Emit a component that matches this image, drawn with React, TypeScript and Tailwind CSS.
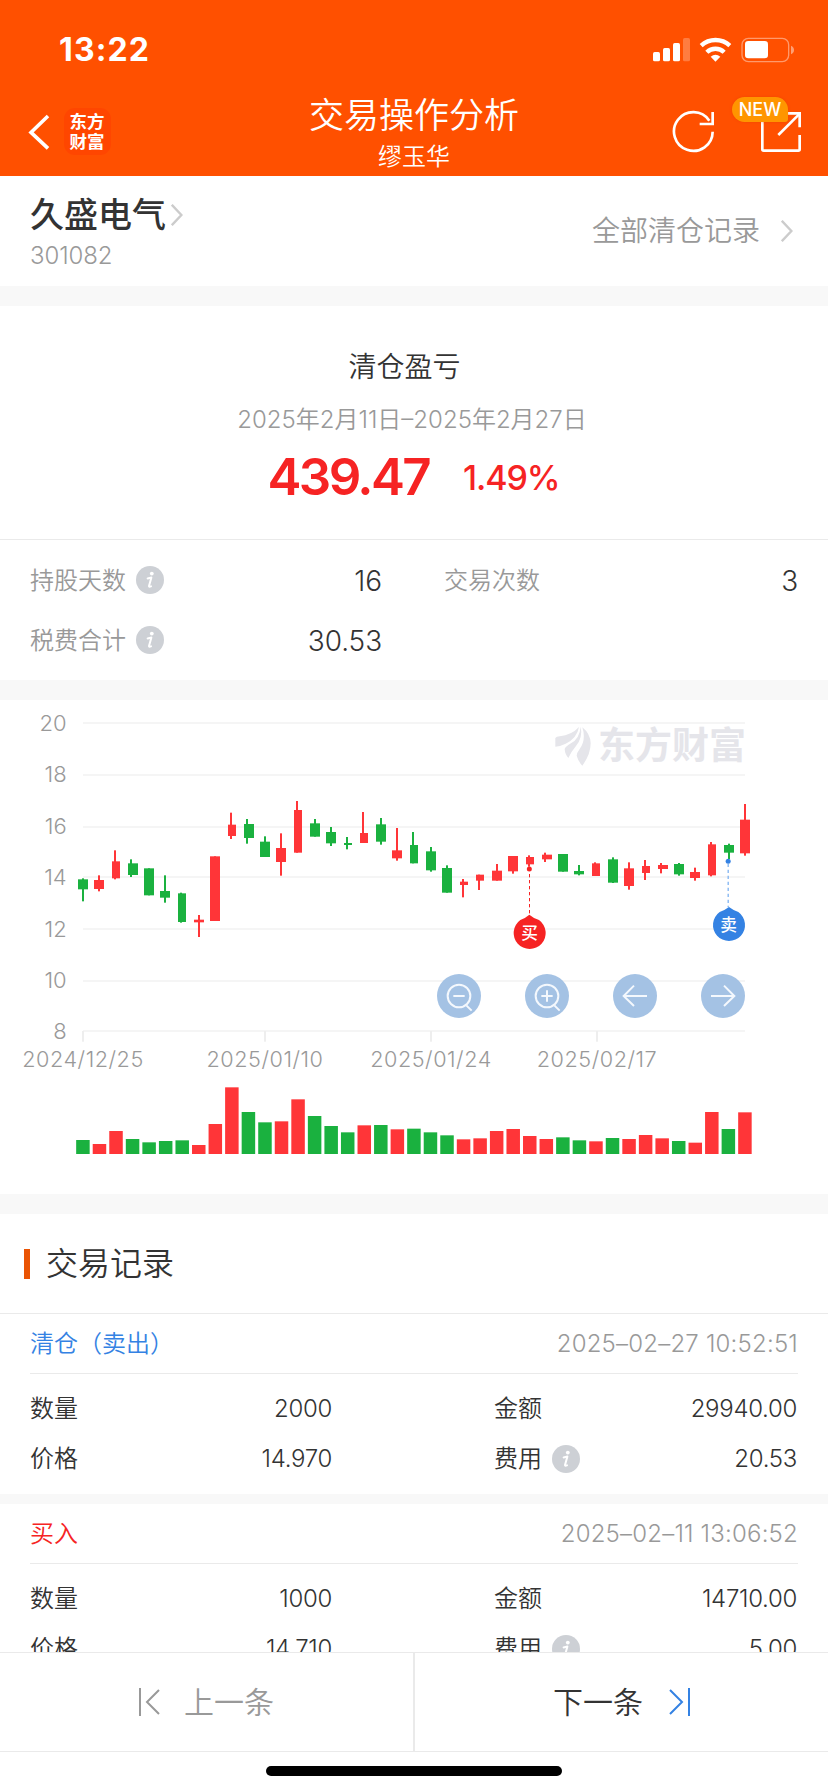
import type { ReactNode } from 'react'

type Color = 'r' | 'g'

// color, body x, body width, wick x, high, body top, body bottom, low
type Candle = [Color, number, number, number, number, number, number, number]

const RED = '#ff3538'
const GREEN = '#1ab13f'

const candles: Candle[] = [
  ['g', 234, 30, 246, 535, 538, 568, 604],
  ['r', 282, 30, 294, 526, 540, 567, 574],
  ['r', 336, 24, 342, 451, 484, 535, 538],
  ['g', 384, 30, 390, 478, 490, 525, 531],
  ['g', 432, 30, 444, 505, 505, 586, 586],
  ['g', 480, 30, 492, 526, 573, 593, 608],
  ['g', 534, 24, 540, 578, 580, 666, 668],
  ['r', 582, 30, 594, 645, 659, 667, 711],
  ['r', 630, 30, 642, 469, 469, 663, 663],
  ['r', 684, 24, 690, 338, 374, 408, 417],
  ['g', 732, 30, 738, 357, 372, 414, 431],
  ['g', 780, 30, 792, 409, 425, 471, 471],
  ['r', 828, 30, 840, 400, 444, 486, 527],
  ['r', 882, 24, 888, 303, 330, 458, 458],
  ['g', 930, 30, 942, 357, 370, 410, 410],
  ['g', 978, 30, 990, 381, 396, 430, 438],
  ['g', 1032, 24, 1038, 411, 429, 435, 448],
  ['r', 1080, 24, 1086, 336, 399, 429, 429],
  ['g', 1128, 30, 1140, 354, 373, 425, 434],
  ['r', 1176, 30, 1188, 384, 451, 475, 482],
  ['g', 1230, 24, 1236, 396, 435, 490, 490],
  ['g', 1278, 30, 1290, 441, 454, 511, 515],
  ['g', 1326, 30, 1338, 496, 504, 578, 578],
  ['r', 1380, 24, 1386, 537, 545, 555, 592],
  ['r', 1428, 24, 1434, 524, 524, 542, 570],
  ['r', 1476, 30, 1488, 492, 512, 542, 542],
  ['r', 1524, 30, 1536, 468, 468, 514, 521],
  ['r', 1578, 24, 1584, 466, 471, 493, 500],
  ['r', 1626, 30, 1632, 458, 464, 478, 486],
  ['g', 1674, 30, 1686, 462, 462, 515, 515],
  ['g', 1722, 30, 1734, 495, 513, 523, 526],
  ['r', 1776, 24, 1782, 487, 490, 528, 528],
  ['g', 1824, 30, 1836, 472, 478, 548, 549],
  ['r', 1872, 30, 1884, 487, 505, 558, 569],
  ['r', 1926, 24, 1932, 480, 498, 519, 540],
  ['r', 1974, 30, 1980, 489, 495, 507, 520],
  ['g', 2022, 30, 2034, 489, 492, 523, 527],
  ['r', 2070, 30, 2082, 503, 516, 534, 542],
  ['r', 2124, 24, 2130, 426, 433, 526, 529],
  ['g', 2172, 30, 2184, 431, 435, 458, 477],
  ['r', 2220, 30, 2232, 312, 359, 460, 467],
]

const volumeTops = [
  1320, 1332, 1293, 1317, 1327, 1323, 1321, 1335, 1272, 1162, 1236, 1267, 1264, 1198,
  1248, 1278, 1297, 1276, 1275, 1288, 1286, 1297, 1306, 1318, 1315, 1293, 1287, 1308,
  1317, 1312, 1321, 1324, 1314, 1317, 1305, 1315, 1323, 1328, 1236, 1287, 1237,
]

const gridLines = [
  { label: '20', y: 66 },
  { label: '18', y: 222 },
  { label: '16', y: 378 },
  { label: '14', y: 528 },
  { label: '12', y: 684 },
  { label: '10', y: 840 },
  { label: '8', y: 990 },
]

const dates = [
  { label: '2024/12/25', x: 249 },
  { label: '2025/01/10', x: 795 },
  { label: '2025/01/24', x: 1293 },
  { label: '2025/02/17', x: 1791 },
]

interface Trade {
  type: string
  tone: string
  time: string
  quantity: string
  price: string
  amount: string
  fee: string
}

const trades: Trade[] = [
  {
    type: '清仓（卖出）',
    tone: 'text-[#3482e3]',
    time: '2025–02–27 10:52:51',
    quantity: '2000',
    price: '14.970',
    amount: '29940.00',
    fee: '20.53',
  },
  {
    type: '买入',
    tone: 'text-[#f62323]',
    time: '2025–02–11 13:06:52',
    quantity: '1000',
    price: '14.710',
    amount: '14710.00',
    fee: '5.00',
  },
]

function InfoIcon() {
  return (
    <svg width="28" height="28" viewBox="0 0 28 28" className="shrink-0">
      <circle cx="14" cy="14" r="14" fill="#cdd0d5" />
      <circle cx="15.8" cy="7.6" r="1.9" fill="#fff" />
      <path d="M11.6 12.4 L15.4 11.6 L13 20 Q12.8 21.2 15 20.4" fill="none" stroke="#fff" strokeWidth="2" strokeLinejoin="round" strokeLinecap="round" />
    </svg>
  )
}

function Chevron() {
  return (
    <svg width="12" height="22" viewBox="0 0 12 22" className="shrink-0">
      <path d="M0.8 0.8 L10.4 11 L0.8 21.2" fill="none" stroke="#ccc" strokeWidth="2.4" />
    </svg>
  )
}

function StatusIcons() {
  return (
    <svg width="142" height="26" viewBox="717 110 426 78" fill="#fff">
      <rect x="717" y="155" width="21" height="28" rx="5" />
      <rect x="747" y="143" width="21" height="40" rx="5" />
      <rect x="777" y="128" width="21" height="55" rx="5" />
      <rect x="807" y="113" width="21" height="70" rx="5" opacity="0.25" />
      <path d="M861.5 136 A63 63 0 0 1 947.5 136" fill="none" stroke="#fff" strokeWidth="13" />
      <path d="M878.5 156 A37 37 0 0 1 930.5 156" fill="none" stroke="#fff" strokeWidth="13" />
      <path d="M890 169 Q904.5 158 919 169 L904.5 184 Z" />
      <rect x="984" y="114" width="140" height="70" rx="19" fill="none" stroke="#fff" strokeWidth="4" opacity="0.42" />
      <rect x="993" y="122" width="69" height="52" rx="10" />
      <path d="M1131 136 Q1140 140 1140 149 Q1140 158 1131 162 Z" opacity="0.45" />
    </svg>
  )
}

function Header() {
  return (
    <header className="flex h-[176px] flex-col bg-[#ff5000] text-white">
      <div className="flex h-[94px] items-start justify-between pr-[33px] pl-[59px]">
        <span className="mt-[32px] text-[32px] leading-[36px] font-bold tracking-[1.1px]">13:22</span>
        <div className="mt-[36.7px]">
          <StatusIcons />
        </div>
      </div>
      <div className="grid h-[82px] grid-cols-[1fr_220px_1fr]">
        <div className="flex items-start pl-[28px]">
          <svg width="22" height="36" viewBox="0 0 22 36" className="mt-[20px]">
            <path d="M20 2 L3 18.4 L20 34.4" fill="none" stroke="#fff" strokeWidth="3.6" />
          </svg>
          <div className="mt-[14px] ml-[14px] flex h-[47px] w-[47px] items-center justify-center rounded-[11px] bg-[#ff4600]">
            <span className="w-[36px] text-[17.5px] leading-[20px] font-bold break-all">东方财富</span>
          </div>
        </div>
        <div className="text-center whitespace-nowrap">
          <h1 className="text-[35px] leading-[42px]">交易操作分析</h1>
          <p className="text-[24px] leading-[42px]">缪玉华</p>
        </div>
        <div className="flex justify-end pr-[24px]">
          <div className="relative mt-px h-[60px] w-[133px]">
            <svg width="133" height="60" viewBox="771 285 399 180" fill="none" stroke="#fff" strokeWidth="8">
              <path d="M896 395 A58 58 0 1 1 886 362" />
              <path d="M896 336 V372 H857" />
              <path d="M1045 360 V448 Q1045 452 1049 452 H1153 Q1157 452 1157 448 V405" />
              <path d="M1118 340 H1157 V382" />
              <path d="M1093 405 L1155 343" />
            </svg>
            <span className="absolute top-[2px] left-[61px] flex h-[25px] w-[56px] items-center justify-center rounded-[12.5px] rounded-br-[3px] bg-[#ff9500] text-[18px] font-medium shadow-[0_0_3px_rgba(220,60,0,0.4)]">
              NEW
            </span>
          </div>
        </div>
      </div>
    </header>
  )
}

function StockBar() {
  return (
    <section className="flex h-[110px] justify-between bg-white pr-[35px] pl-[30px]">
      <div>
        <div className="mt-[17px] flex h-[44px] items-center gap-[5px]">
          <h2 className="text-[34px] leading-[44px] font-medium text-[#333]">久盛电气</h2>
          <Chevron />
        </div>
        <p className="mt-[4px] text-[24px] leading-[30px] tracking-[-0.1px] text-[#999]">301082</p>
      </div>
      <div className="flex h-[110px] items-center gap-[21px] text-[28px] text-[#999]">
        <span>全部清仓记录</span>
        <Chevron />
      </div>
    </section>
  )
}

function Stat({ label, value, info }: { label: string; value: string; info?: boolean }) {
  return (
    <div className="flex h-[60px] items-center">
      <span className="pt-[2px] text-[24px] text-[#999]">{label}</span>
      {info && (
        <span className="ml-[10px]">
          <InfoIcon />
        </span>
      )}
      <span className="ml-auto pt-px text-[28px] tracking-[-0.1px] text-[#333]">{value}</span>
    </div>
  )
}

function Summary() {
  return (
    <section className="h-[374px] bg-white">
      <div className="flex h-[234px] flex-col items-center border-b border-[#eaeaea] pt-[39px]">
        <h3 className="pr-[19px] text-[28px] leading-[44px] text-[#333]">清仓盈亏</h3>
        <p className="mt-[11px] pr-[4px] text-[24px] leading-[40px] text-[#999]">2025年2月11日–2025年2月27日</p>
        <div className="mt-[5px] flex h-[64px] items-center gap-[34px] pr-px text-[#f62323]">
          <span className="text-[51px] font-semibold tracking-[-2.6px]">439.47</span>
          <span className="text-[34px] font-medium tracking-[-1.1px]">1.49%</span>
        </div>
      </div>
      <div className="grid grid-cols-[352px_354px] gap-x-[62px] px-[30px] pt-[10px]">
        <Stat label="持股天数" value="16" info />
        <Stat label="交易次数" value="3" />
        <Stat label="税费合计" value="30.53" info />
      </div>
    </section>
  )
}

function Watermark() {
  return (
    <div className="absolute top-[24px] right-[82px] flex items-center gap-[6px] text-[#e5e5ea]">
      <svg width="37" height="40" viewBox="80 75 111 120" fill="currentColor">
        <path d="M81 111 Q84 107 94 106 Q130 102 152 78 Q146 112 112 128 Q96 136 81 137 Z" />
        <path d="M157 77 Q164 108 143 135 Q130 150 120 171 Q110 160 109 144 Q112 136 128 127 Q154 112 157 77 Z" />
        <path d="M162 79 Q186 98 187 127 Q187 160 162 194 Q150 182 145 164 Q145 156 154 144 Q174 116 162 79 Z" />
      </svg>
      <span className="text-[37px] leading-[44px] font-bold">东方财富</span>
    </div>
  )
}

function RoundButton({ children }: { children: ReactNode }) {
  return (
    <button className="flex h-[44px] w-[44px] items-center justify-center rounded-full bg-[#a4c2e4]">
      <svg width="44" height="44" viewBox="0 0 132 132" fill="none" stroke="#f4f8fd" strokeWidth="6">
        {children}
      </svg>
    </button>
  )
}

function Chart() {
  return (
    <section className="relative h-[494px] bg-white">
      <svg width="828" height="494" viewBox="0 0 2484 1482">
        {gridLines.map((line, i) => (
          <g key={line.label}>
            <rect x="249" y={line.y} width="1986" height="6" fill="#f5f5f5" />
            <text x="200" y={93 + i * 154.2} textAnchor="end" fontSize="66" fill="#999">
              {line.label}
            </text>
          </g>
        ))}
        {dates.map((date) => (
          <g key={date.label}>
            <rect x={date.x - 3} y="993" width="6" height="32" fill="#eee" />
            <text x={date.x} y="1101" textAnchor="middle" fontSize="65" letterSpacing="1.6" fill="#999">
              {date.label}
            </text>
          </g>
        ))}
        {candles.map(([color, x, width, wickX, high, top, bottom, low]) => (
          <g key={x} fill={color === 'r' ? RED : GREEN}>
            <rect x={wickX} y={high} width="6" height={low - high} />
            <rect x={x} y={top} width={width} height={bottom - top} />
          </g>
        ))}
        {volumeTops.map((top, i) => (
          <rect
            key={i}
            x={228.5 + i * 49.65}
            y={top}
            width="40.5"
            height={1362 - top}
            fill={candles[i][0] === 'r' ? RED : GREEN}
          />
        ))}

        {/* buy / sell markers */}
        <g fill="#f62323">
          <circle cx="1588" cy="507" r="7.5" />
          <path d="M1588.5 522 V645" stroke="#f62323" strokeWidth="3" strokeDasharray="10 8" />
          <path d="M1588 644 Q1598 653 1617 660 A48 48 0 1 1 1561 660 Q1578 653 1588 644 Z" />
          <text x="1588.5" y="717" textAnchor="middle" fontSize="50" fontWeight="500" fill="#fff">买</text>
        </g>
        <g fill="#3482e3">
          <circle cx="2184.5" cy="484" r="7.5" />
          <path d="M2184.5 491 V622" stroke="#70aaf0" strokeWidth="3.5" strokeDasharray="10 8" />
          <path d="M2187 621 Q2197 629 2215 636 A48 48 0 1 1 2159 636 Q2177 629 2187 621 Z" />
          <text x="2186" y="694" textAnchor="middle" fontSize="50" fontWeight="500" fill="#fff">卖</text>
        </g>
      </svg>
      <Watermark />
      <div className="absolute top-[274px] right-[83px] flex gap-[44px]">
        <RoundButton>
          <circle cx="66" cy="66" r="34" />
          <path d="M49 66 H83 M88 94 L104 110" />
        </RoundButton>
        <RoundButton>
          <circle cx="66" cy="66" r="34" />
          <path d="M49 66 H83 M66 49 V83 M88 94 L104 110" />
        </RoundButton>
        <RoundButton>
          <path d="M102 66 H33 M63 35 L32 66 L63 96" />
        </RoundButton>
        <RoundButton>
          <path d="M30 66 H99 M69 35 L100 66 L69 96" />
        </RoundButton>
      </div>
    </section>
  )
}

function TradeCard({ trade }: { trade: Trade }) {
  return (
    <article className="h-[180px] bg-white px-[30px] text-[24px] text-[#333]">
      <div className="flex h-[60px] items-center justify-between border-b border-[#eaeaea]">
        <span className={trade.tone}>{trade.type}</span>
        <span className="tracking-[0.2px] text-[#999]">{trade.time}</span>
      </div>
      <div className="grid grid-cols-[302px_303px] gap-x-[162px] pt-[10px]">
        <div className="flex h-[50px] items-center justify-between">
          <span>数量</span>
          <span className="tracking-[-0.3px]">{trade.quantity}</span>
        </div>
        <div className="flex h-[50px] items-center justify-between">
          <span>金额</span>
          <span className="tracking-[-0.3px]">{trade.amount}</span>
        </div>
        <div className="flex h-[50px] items-center justify-between">
          <span>价格</span>
          <span className="tracking-[-0.3px]">{trade.price}</span>
        </div>
        <div className="flex h-[50px] items-center">
          <span className="mr-[10px]">费用</span>
          <InfoIcon />
          <span className="ml-auto tracking-[-0.3px]">{trade.fee}</span>
        </div>
      </div>
    </article>
  )
}

function Records() {
  return (
    <section className="min-h-0 flex-1 overflow-hidden">
      <div className="flex h-[100px] items-center border-b border-[#eaeaea] bg-white pl-[24px]">
        <span className="h-[30px] w-[6px] bg-[#ea5404]" />
        <h3 className="ml-[16px] text-[32px] text-[#333]">交易记录</h3>
      </div>
      <div className="flex flex-col gap-[10px]">
        {trades.map((trade) => (
          <TradeCard key={trade.time} trade={trade} />
        ))}
      </div>
    </section>
  )
}

function Footer() {
  return (
    <footer className="bg-white">
      <div className="grid h-[100px] grid-cols-2 border-y border-[#eaeaea] text-[30px]">
        <button className="flex items-center border-r border-[#eaeaea] pl-[139px] text-[#999]">
          <svg width="22" height="28" viewBox="0 0 22 28" fill="none" stroke="currentColor" strokeWidth="2">
            <path d="M1 0 V28 M20 2 L8 14 L20 26" />
          </svg>
          <span className="ml-[23px]">上一条</span>
        </button>
        <button className="flex items-center border-l border-[#eaeaea] pl-[138px] text-[#333]">
          <span>下一条</span>
          <svg width="22" height="28" viewBox="0 0 22 28" fill="none" stroke="#3482e3" strokeWidth="2" className="ml-[25px]">
            <path d="M21 0 V28 M2 2 L14 14 L2 26" />
          </svg>
        </button>
      </div>
      <div className="flex h-[40px] justify-center pt-[14px]">
        <div className="h-[10px] w-[296px] rounded-full bg-black" />
      </div>
    </footer>
  )
}

export default function App() {
  return (
    <div className="flex h-[1792px] w-[828px] flex-col overflow-hidden bg-[#f8f8f8] font-[Inter,'Noto_Sans_CJK_SC',sans-serif] font-[350]">
      <Header />
      <StockBar />
      <div className="mt-[20px]">
        <Summary />
      </div>
      <div className="my-[20px]">
        <Chart />
      </div>
      <Records />
      <Footer />
    </div>
  )
}
